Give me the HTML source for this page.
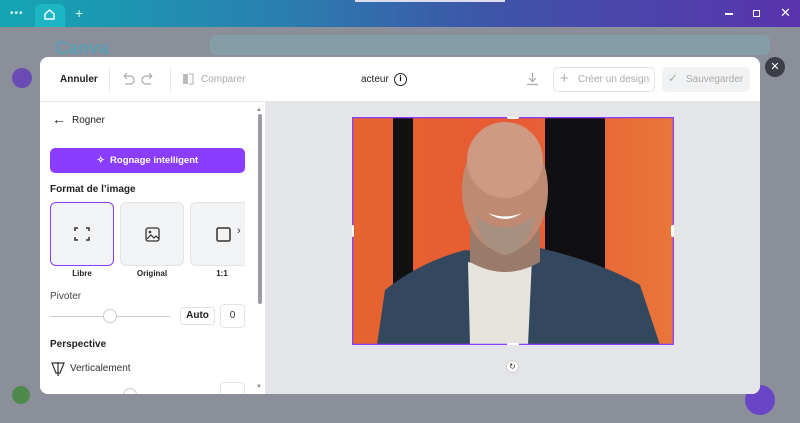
<!DOCTYPE html>
<html><head><meta charset="utf-8"><style>
*{margin:0;padding:0;box-sizing:border-box}
body{width:800px;height:423px;overflow:hidden;position:relative;font-family:"Liberation Sans",sans-serif;background:#8a8f99}
.top{position:absolute;left:0;top:0;width:800px;height:27px;background:linear-gradient(90deg,#14a6b2 0%,#2a7fb0 35%,#3d56a8 60%,#5a33ad 100%)}
.tab{position:absolute;left:35px;top:4px;width:30px;height:23px;background:#1bb5c4;border-radius:6px 6px 0 0}
.modal{position:absolute;left:40px;top:57px;width:720px;height:337px;background:#fff;border-radius:8px;overflow:hidden}
.hdr{position:absolute;left:0;top:0;width:720px;height:45px;border-bottom:1px solid #e6e7ea;font-size:10px}
.t{position:absolute;white-space:nowrap}
.left{position:absolute;left:0;top:45px;width:225px;height:292px;background:#fff}
.canvas{position:absolute;left:225px;top:45px;width:495px;height:292px;background:#e3e5e9}
.card{position:absolute;top:145px;width:64px;height:64px;border-radius:6px;background:#f2f3f5;border:1px solid #e3e4e8}
.lbl{position:absolute;font-size:8px;font-weight:bold;color:#222;text-align:center;width:64px}
</style></head><body>
<div class="top"><div class="tab"></div>
<div class="t" style="left:10px;top:8px;color:#dff;font-size:10px;letter-spacing:1px">•••</div>
<svg style="position:absolute;left:43px;top:8px" width="13" height="12" viewBox="0 0 13 12"><path d="M2 6L6.5 2 11 6V11H2Z" fill="none" stroke="#fff" stroke-width="1.4"/></svg>
<div class="t" style="left:75px;top:5px;color:#cfe;font-size:14px">+</div>
<div style="position:absolute;left:355px;top:0;width:150px;height:2px;background:#dde"></div>
<div style="position:absolute;left:725px;top:13px;width:8px;height:1.5px;background:#fff"></div>
<div style="position:absolute;left:753px;top:10px;width:7px;height:7px;border:1.4px solid #fff"></div>
<div class="t" style="left:780px;top:5px;color:#fff;font-size:13px">✕</div>
</div>
<div style="position:absolute;left:210px;top:35px;width:560px;height:20px;background:#82a0aa;border-radius:6px;opacity:.8"></div>
<div class="t" style="left:55px;top:38px;color:#5d9db4;font-size:18px;font-weight:bold">Canva</div>
<div style="position:absolute;left:12px;top:68px;width:20px;height:20px;border-radius:50%;background:#6a4bb3"></div>
<div style="position:absolute;left:12px;top:386px;width:18px;height:18px;border-radius:50%;background:#4e8a4e"></div>
<div style="position:absolute;left:745px;top:385px;width:30px;height:30px;border-radius:50%;background:#6b45c8"></div>
<div style="position:absolute;left:765px;top:57px;width:20px;height:20px;border-radius:50%;background:#3b3e47;color:#fff;font-size:11px;text-align:center;line-height:20px">✕</div>
<div class="modal">
<div class="hdr">
<div class="t" style="left:20px;top:17px;color:#222;font-weight:bold">Annuler</div>
<div style="position:absolute;left:69px;top:10px;width:1px;height:25px;background:#e6e7ea"></div>
<svg style="position:absolute;left:81px;top:15px" width="34" height="14" viewBox="0 0 34 14"><path d="M3 4H9a4 4 0 010 8H4M3 4l3-3M3 4l3 3" fill="none" stroke="#aaa" stroke-width="1.2"/><path d="M31 4H25a4 4 0 000 8H30M31 4l-3-3M31 4l-3 3" fill="none" stroke="#aaa" stroke-width="1.2"/></svg>
<div style="position:absolute;left:130px;top:10px;width:1px;height:25px;background:#e6e7ea"></div>
<svg style="position:absolute;left:142px;top:16px" width="13" height="12"><rect x="1" y="1" width="5" height="10" fill="#bbb"/><path d="M7 1h4v10H7" fill="none" stroke="#bbb" stroke-width="1.2"/></svg>
<div class="t" style="left:161px;top:17px;color:#aaa">Comparer</div>
<div class="t" style="left:321px;top:17px;color:#222">acteur</div>
<div style="position:absolute;left:354px;top:16px;width:13px;height:13px;border:1.5px solid #222;border-radius:50%;font-size:8px;font-weight:bold;text-align:center;line-height:10px">i</div>
<svg style="position:absolute;left:486px;top:15px" width="13" height="14"><path d="M6.5 1v8M3 6l3.5 3.5L10 6M1 12.5h11" fill="none" stroke="#aaa" stroke-width="1.2"/></svg>
<div style="position:absolute;left:513px;top:10px;width:102px;height:25px;border:1px solid #e3e4e8;border-radius:5px"></div>
<div class="t" style="left:520px;top:13px;color:#aaa;font-size:15px">+</div>
<div class="t" style="left:538px;top:17px;color:#aaa">Créer un design</div>
<div style="position:absolute;left:622px;top:10px;width:88px;height:25px;background:#f1f2f4;border-radius:5px"></div>
<div class="t" style="left:628px;top:14px;color:#aaa;font-size:12px">✓</div>
<div class="t" style="left:646px;top:17px;color:#aaa">Sauvegarder</div>
</div>
<div class="left">
<div class="t" style="left:12px;top:9px;font-size:14px;color:#222">←</div>
<div class="t" style="left:32px;top:13px;font-size:10px;color:#222">Rogner</div>
<div style="position:absolute;left:10px;top:46px;width:195px;height:25px;border-radius:5px;background:#8b3dff;color:#fff;font-size:9.5px;font-weight:bold;text-align:center;line-height:25px">✧&nbsp; Rognage intelligent</div>
<div class="t" style="left:10px;top:82px;font-size:10px;font-weight:bold;color:#222">Format de l’image</div>
</div>
<div class="card" style="left:10px;border:1.5px solid #8b3dff;background:#f2f3f5"><svg style="position:absolute;left:23px;top:24px" width="16" height="14"><path d="M1 4V1h3M12 1h3v3M15 10v3h-3M4 13H1v-3" fill="none" stroke="#333" stroke-width="1.5"/></svg></div>
<div class="card" style="left:80px"><svg style="position:absolute;left:24px;top:24px" width="15" height="15"><rect x="1" y="1" width="13" height="13" rx="2" fill="none" stroke="#333" stroke-width="1.3"/><path d="M2 12l4-4 3 3 2-2 3 3" fill="none" stroke="#333" stroke-width="1.2"/><circle cx="5" cy="5" r="1.3" fill="#333"/></svg></div>
<div class="card" style="left:150px;width:55px;border-right:none;border-radius:6px 0 0 6px"><svg style="position:absolute;left:25px;top:24px" width="15" height="15"><rect x="1" y="1" width="13" height="13" rx="1.5" fill="none" stroke="#333" stroke-width="1.5"/></svg><div class="t" style="left:46px;top:22px;font-size:11px;color:#333">›</div></div>
<div class="lbl" style="left:10px;top:212px">Libre</div>
<div class="lbl" style="left:80px;top:212px">Original</div>
<div class="lbl" style="left:150px;top:212px">1:1</div>
<div class="t" style="left:10px;top:234px;font-size:10px;color:#444">Pivoter</div>
<div style="position:absolute;left:10px;top:259px;width:120px;height:1px;background:#ccc"></div>
<div style="position:absolute;left:63px;top:252px;width:14px;height:14px;border-radius:50%;background:#fff;border:1px solid #ccc"></div>
<div style="position:absolute;left:140px;top:250px;width:35px;height:18px;border:1px solid #e3e4e8;border-radius:3px;font-size:10px;font-weight:bold;text-align:center;line-height:16px;color:#222">Auto</div>
<div style="position:absolute;left:180px;top:247px;width:25px;height:24px;border:1px solid #e3e4e8;border-radius:4px;font-size:10px;text-align:center;line-height:22px;color:#333">0</div>
<div class="t" style="left:10px;top:282px;font-size:10px;font-weight:bold;color:#222">Perspective</div>
<svg style="position:absolute;left:11px;top:304px" width="14" height="15"><path d="M1 2h12L9 12H5Z" fill="none" stroke="#333" stroke-width="1.2"/><path d="M7 1v14M7 7v1" stroke="#333" stroke-width="1.2"/></svg>
<div class="t" style="left:30px;top:306px;font-size:10px;color:#333">Verticalement</div>
<div style="position:absolute;left:180px;top:325px;width:25px;height:24px;border:1px solid #e3e4e8;border-radius:4px"></div>
<div style="position:absolute;left:83px;top:331px;width:14px;height:14px;border-radius:50%;background:#fff;border:1px solid #ccc"></div>
<div style="position:absolute;left:218px;top:57px;width:4px;height:190px;background:#9a9ca2;border-radius:2px"></div>
<div class="t" style="left:216px;top:50px;font-size:6px;color:#888">▲</div>
<div class="t" style="left:216px;top:327px;font-size:6px;color:#888">▼</div>
<div class="canvas"></div>
<svg style="position:absolute;left:312px;top:60px" width="322" height="228" viewBox="352 117 322 228">
<defs><linearGradient id="bg" x1="0" x2="1"><stop offset="0" stop-color="#e5642f"/><stop offset=".5" stop-color="#e85a34"/><stop offset="1" stop-color="#e8763a"/></linearGradient></defs>
<rect x="352" y="117" width="322" height="228" fill="url(#bg)"/>
<rect x="393" y="117" width="20" height="170" fill="#111"/>
<rect x="545" y="117" width="60" height="165" fill="#101012"/>
<path d="M377 345L385 290Q420 262 465 250L505 255L540 248Q600 262 640 285L660 345Z" fill="#33475e"/>
<path d="M468 262L505 270 532 258 528 345H470Z" fill="#e6e4dc"/>
<path d="M470 225Q505 262 540 225L540 262Q505 282 470 262Z" fill="#9a7a6a"/>
<ellipse cx="505" cy="190" rx="43" ry="62" fill="#c08a72"/>
<ellipse cx="505" cy="160" rx="38" ry="38" fill="#cf9a84"/>
<path d="M475 215Q505 240 535 215Q530 250 505 255Q480 250 475 215Z" fill="#a89080"/>
<path d="M488 213Q505 225 522 213Q505 220 488 213Z" fill="#fff"/>
<rect x="352.5" y="117.5" width="321" height="227" fill="none" stroke="#8b3dff" stroke-width="1.5"/>
<rect x="507" y="115" width="12" height="4" rx="2" fill="#fff"/><rect x="507" y="343" width="12" height="4" rx="2" fill="#fff"/>
<rect x="350" y="225" width="4" height="12" rx="2" fill="#fff"/><rect x="671" y="225" width="4" height="12" rx="2" fill="#fff"/>
</svg>
<div style="position:absolute;left:466px;top:303px;width:13px;height:13px;border-radius:50%;background:#fff;border:1px solid #ccc;font-size:8px;text-align:center;line-height:11px;color:#333">↻</div>
</div>
</body></html>
